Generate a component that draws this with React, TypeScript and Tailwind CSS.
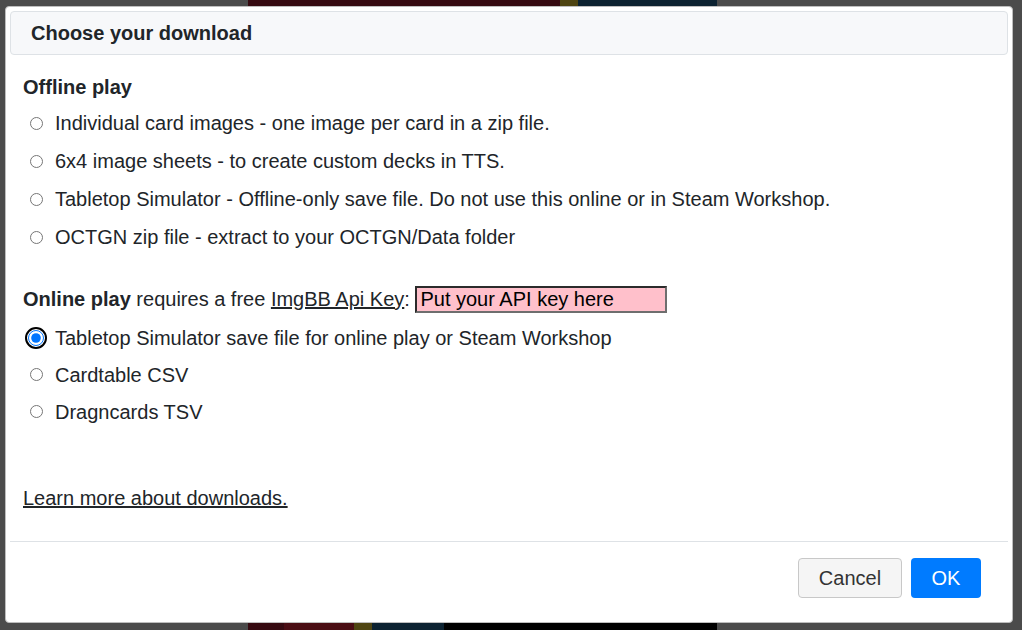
import { useState } from 'react';

const offline = [
  'Individual card images - one image per card in a zip file.',
  '6x4 image sheets - to create custom decks in TTS.',
  'Tabletop Simulator - Offline-only save file. Do not use this online or in Steam Workshop.',
  'OCTGN zip file - extract to your OCTGN/Data folder',
];

const online = [
  'Tabletop Simulator save file for online play or Steam Workshop',
  'Cardtable CSV',
  'Dragncards TSV',
];

function Backdrop() {
  // the page behind the modal, already dimmed by the overlay
  return (
    <div className="flex h-[630px] w-full bg-[#4b4b4b]">
      <div className="w-[248px]" />
      <div className="flex w-[469px] flex-col justify-between bg-black">
        <div className="flex h-[8px]">
          <div className="w-[312px] bg-[#360a11]" />
          <div className="w-[18px] bg-[#4f4512]" />
          <div className="flex-1 bg-[#0c2231]" />
        </div>
        <div className="flex h-[10px] items-end">
          <div className="h-full w-[36px] bg-[#360a11]" />
          <div className="h-full w-[70px] bg-[#4a0d14]" />
          <div className="h-full w-[18px] bg-[#4f4512]" />
          <div className="h-full w-[72px] bg-[#0c2231]" />
        </div>
      </div>
    </div>
  );
}

function Radio({
  label,
  checked,
  onSelect,
  rowClass,
}: {
  label: string;
  checked: boolean;
  onSelect: () => void;
  rowClass: string;
}) {
  return (
    <label className={'flex items-center ' + rowClass}>
      {checked ? (
        <span className="ml-[2px] mr-[8px] flex rounded-full border-2 border-black p-px">
          <input
            type="radio"
            name="download"
            checked
            onChange={onSelect}
            className="m-0 h-[16px] w-[16px] accent-[#0075ff]"
          />
        </span>
      ) : (
        <input
          type="radio"
          name="download"
          checked={false}
          onChange={onSelect}
          className="ml-[7px] mr-[12px] h-[13px] w-[13px] accent-[#0075ff]"
        />
      )}
      <span>{label}</span>
    </label>
  );
}

export default function App() {
  const [choice, setChoice] = useState('online-0');

  return (
    <div
      className="relative h-[630px] w-[1022px] overflow-hidden text-[20px] text-[#212529]"
      style={{ fontFamily: '"Liberation Sans", Arial, sans-serif' }}
    >
      <Backdrop />

      <div className="absolute left-[5px] top-[6px] flex h-[617px] w-[1008px] flex-col rounded-[4px] border border-[#bdbdbd] bg-white">
        <div className="mx-[4px] mt-[4px] flex h-[44px] items-center rounded-[4px] border border-[#dee2e6] bg-[#f7f8fa] px-[20px]">
          <h5 className="text-[20px] font-bold text-[#212529]">Choose your download</h5>
        </div>

        <div className="flex flex-1 flex-col px-[17px] pt-[17px]">
          <div className="h-[30px] font-bold leading-[30px]">Offline play</div>
          <div className="mt-[2px]">
            {offline.map((o, i) => (
              <Radio
                key={o}
                label={o}
                rowClass="h-[38px]"
                checked={choice === 'offline-' + i}
                onSelect={() => setChoice('offline-' + i)}
              />
            ))}
          </div>

          <div className="mt-[28px] flex h-[30px] items-center">
            <span className="font-bold">Online play</span>
            <span className="whitespace-pre"> requires a free </span>
            <a href="#" className="text-[#212529] underline">
              ImgBB Api Key
            </a>
            <span className="whitespace-pre">: </span>
            <input
              placeholder="Put your API key here"
              className="h-[27px] w-[252px] border-2 border-t-[#2b2b2b] border-l-[#2b2b2b] border-b-[#6e6e6e] border-r-[#6e6e6e] bg-[#ffc0cb] px-[3px] text-[20px] text-black placeholder:text-black"
            />
          </div>
          <div className="mt-[5px]">
            {online.map((o, i) => (
              <Radio
                key={o}
                label={o}
                rowClass="h-[37px]"
                checked={choice === 'online-' + i}
                onSelect={() => setChoice('online-' + i)}
              />
            ))}
          </div>

          <div className="mt-[53px] h-[30px] leading-[30px]">
            <a href="#" className="text-[#212529] underline">
              Learn more about downloads.
            </a>
          </div>
        </div>

        <div className="mx-[4px] border-t border-[#dee2e6]" />

        <div className="flex justify-end gap-[9px] pb-[24px] pr-[31px] pt-[16px]">
          <button className="h-[40px] w-[104px] rounded-[4px] border border-[#c8c8c8] bg-[#f5f5f5] text-[20px] text-[#333]">
            Cancel
          </button>
          <button className="h-[40px] w-[70px] rounded-[4px] bg-[#007bff] text-[20px] text-white">
            OK
          </button>
        </div>
      </div>
    </div>
  );
}
